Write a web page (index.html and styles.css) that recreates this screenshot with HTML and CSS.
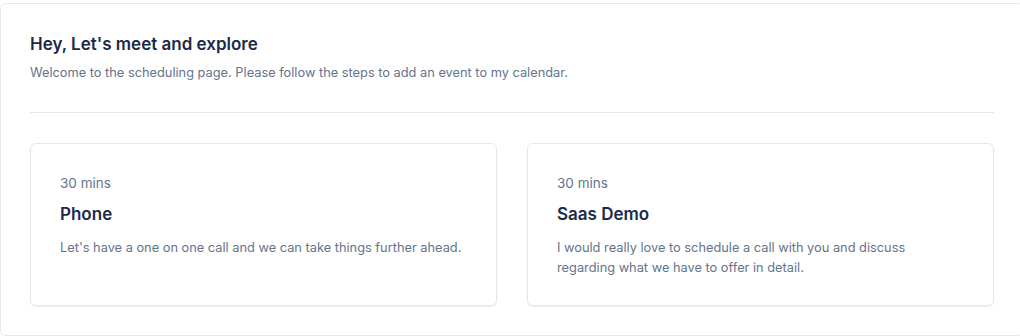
FILE: index.html
```html
<!DOCTYPE html>
<html lang="en">
<head>
  <meta charset="UTF-8" />
  <meta name="viewport" content="width=device-width, initial-scale=1.0"/>
  <title>Schedule a meeting</title>
  <link rel="stylesheet" href="styles.css">
</head>
<body>

  <div class="page">
    <h1>Hey, Let's meet and explore</h1>
    <p class="intro">Welcome to the scheduling page. Please follow the steps to add an event to my calendar.</p>

    <hr class="divider">

    <div class="events">
      <div class="event-card">
        <div class="duration">30 mins</div>
        <h2>Phone</h2>
        <p class="desc">Let's have a one on one call and we can take things further ahead.</p>
      </div>
      <div class="event-card">
        <div class="duration">30 mins</div>
        <h2>Saas Demo</h2>
        <p class="desc">I would really love to schedule a call with you and discuss regarding what we have to offer in detail.</p>
      </div>
    </div>
  </div>

</body>
</html>
```

FILE: styles.css
```css
body {
  font-family: Inter, "Noto Sans", sans-serif;
  margin: 0;
  padding-top: 3px;
  background-color: #fff;
  color: #1b2a4a;
  overflow: hidden;
}

.page {
  box-sizing: border-box;
  width: 1024px;
  border: 1px solid #e5e7eb;
  border-radius: 6px;
  padding: 26px 29px 29px;
  background: #fff;
}

h1 {
  font-size: 17px;
  font-weight: 600;
  line-height: 28px;
  margin: 0 0 5px;
  color: #1b2a4a;
}

.intro {
  font-size: 12.8px;
  line-height: 20px;
  margin: 0;
  color: #64748b;
}

.divider {
  border: none;
  border-top: 1px solid #e5e7eb;
  margin: 29px 0 30px;
}

.events {
  display: grid;
  grid-template-columns: 1fr 1fr;
  gap: 30px;
}

.event-card {
  border: 1px solid #e5e7eb;
  border-radius: 6px;
  box-shadow: 0 1px 2px rgba(0, 0, 0, 0.08);
  padding: 29px 29px 27px;
}

.duration {
  font-size: 13.5px;
  line-height: 20px;
  color: #64748b;
}

h2 {
  font-size: 17px;
  font-weight: 600;
  line-height: 24px;
  margin: 9px 0 12px;
  color: #1b2a4a;
}

.desc {
  font-size: 12.8px;
  line-height: 20px;
  margin: 0;
  color: #64748b;
  max-width: 405px;
}
```
